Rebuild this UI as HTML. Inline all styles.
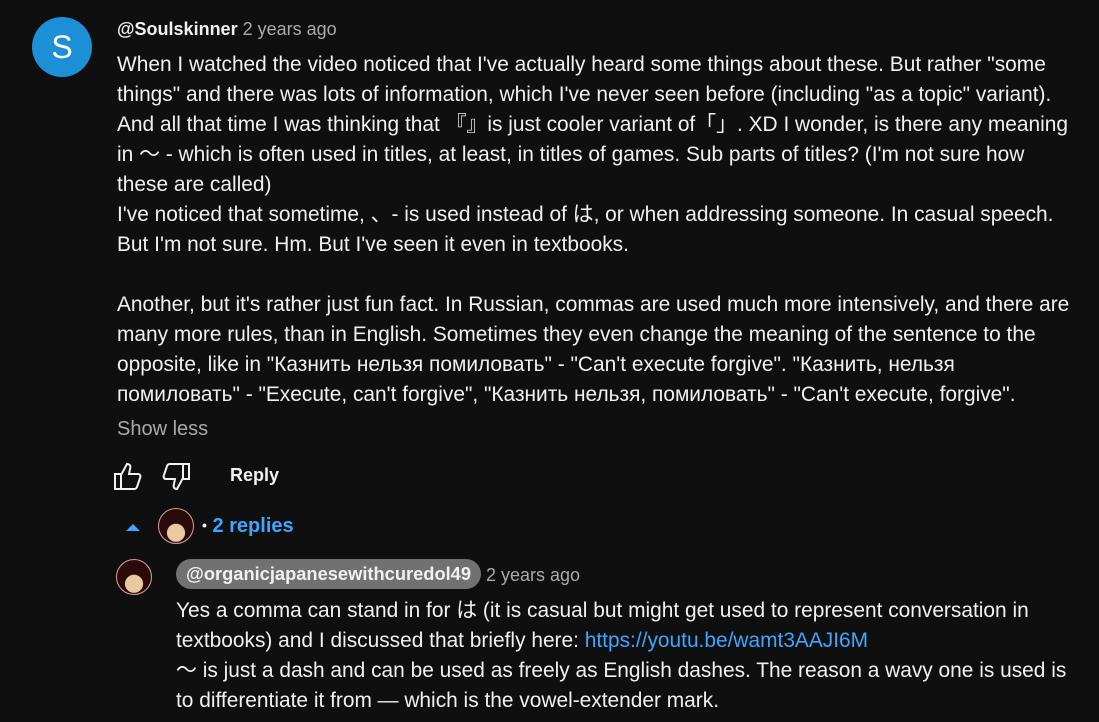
<!DOCTYPE html>
<html><head><meta charset="utf-8"><style>
body{margin:0;width:1099px;height:722px;background:#0f0f0f;overflow:hidden;font-family:"Liberation Sans","Noto Sans CJK JP",sans-serif;color:#f1f1f1;position:relative}
.a{position:absolute;white-space:nowrap}
.t{font-size:20.9px;line-height:30px}
.av{position:absolute;border-radius:50%}
</style></head><body>
<div class="av" style="left:32px;top:17px;width:60px;height:60px;background:#1d8fd6;color:#fff;font-size:32px;text-align:center;line-height:60px">S</div>
<div class="a" style="left:117px;top:19px;font-size:18px;font-weight:bold;">@Soulskinner <span style="font-weight:normal;color:#aaa">2 years ago</span></div>
<div class="a t" style="left:117px;top:50px">When I watched the video noticed that I've actually heard some things about these. But rather "some<br>things" and there was lots of information, which I've never seen before (including "as a topic" variant).<br>And all that time I was thinking that 『』is just cooler variant of「」. XD I wonder, is there any meaning<br>in 〜 - which is often used in titles, at least, in titles of games. Sub parts of titles? (I'm not sure how<br>these are called)<br>I've noticed that sometime, 、- is used instead of は, or when addressing someone. In casual speech.<br>But I'm not sure. Hm. But I've seen it even in textbooks.<br><br>Another, but it's rather just fun fact. In Russian, commas are used much more intensively, and there are<br>many more rules, than in English. Sometimes they even change the meaning of the sentence to the<br>opposite, like in "Казнить нельзя помиловать" - "Can't execute forgive". "Казнить, нельзя<br>помиловать" - "Execute, can't forgive", "Казнить нельзя, помиловать" - "Can't execute, forgive".</div>
<div class="a" style="left:117px;top:418px;font-size:20px;color:#aaa">Show less</div>
<svg class="a" style="left:113px;top:461px" width="30" height="30" viewBox="0 0 30 30" fill="none" stroke="#f1f1f1" stroke-width="2"><path d="M2 13h6v15H2z M8 14l6-11c3 0 4 2 3 5l-1 5h9c2 0 3 2 2 4l-3 9c-1 2-2 2-3 2H8"/></svg>
<svg class="a" style="left:161px;top:462px" width="30" height="30" viewBox="0 0 30 30" fill="none" stroke="#f1f1f1" stroke-width="2"><path d="M22 2h6v15h-6z M22 16l-6 11c-3 0-4-2-3-5l1-5H5c-2 0-3-2-2-4l3-9c1-2 2-2 3-2h13"/></svg>
<div class="a" style="left:230px;top:465px;font-size:18px;font-weight:bold">Reply</div>
<svg class="a" style="left:126px;top:523px" width="14" height="9"><path d="M0 8L7 1L14 8Z" fill="#3ea6ff"/></svg>
<div class="av" style="left:158px;top:508px;width:36px;height:36px;background:radial-gradient(circle at 50% 70%,#e8c9a0 0 30%,#2a0a08 32%);border:1px solid #d9a0a0;box-sizing:border-box"></div>
<div class="a" style="left:202px;top:515px;font-size:20px;color:#3ea6ff;font-weight:bold"><span style="color:#f1f1f1;font-size:14px;vertical-align:2px">•</span> 2 replies</div>
<div class="av" style="left:116px;top:559px;width:36px;height:36px;background:radial-gradient(circle at 50% 70%,#e8c9a0 0 30%,#2a0a08 32%);border:1px solid #d9a0a0;box-sizing:border-box"></div>
<div class="a" style="left:176px;top:559px;height:30px;padding:0 10px;border-radius:15px;background:#717171;font-size:18.3px;font-weight:bold;line-height:30px">@organicjapanesewithcuredol49</div>
<div class="a" style="left:486px;top:565px;font-size:18px;color:#aaa">2 years ago</div>
<div class="a t" style="left:176px;top:596px">Yes a comma can stand in for は (it is casual but might get used to represent conversation in<br>textbooks) and I discussed that briefly here: <span style="color:#3ea6ff">https://youtu.be/wamt3AAJI6M</span><br>〜 is just a dash and can be used as freely as English dashes. The reason a wavy one is used is<br>to differentiate it from — which is the vowel-extender mark.</div>
</body></html>
